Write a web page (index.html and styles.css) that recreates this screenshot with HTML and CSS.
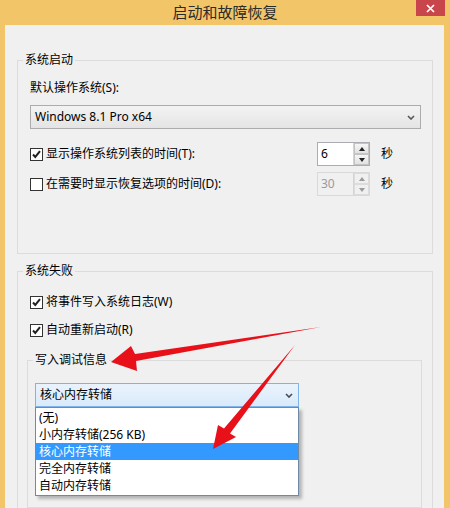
FILE: index.html
```html
<!DOCTYPE html>
<html lang="zh-CN">
<head>
  <meta charset="UTF-8" />
  <title>启动和故障恢复</title>
  <link rel="stylesheet" href="styles.css">
</head>
<body>

  <div class="titlebar">
    <span class="title">启动和故障恢复</span>
    <span class="close">
      <svg width="9" height="9" viewBox="0 0 9 9"><path d="M1 1 L8 8 M8 1 L1 8" stroke="#fff" stroke-width="1.7" fill="none"/></svg>
    </span>
  </div>

  <div class="client">
    <!-- 系统启动 -->
    <fieldset class="group first">
      <legend>系统启动</legend>
      <div class="label">默认操作系统(S):</div>
      <div class="select">
        <span>Windows 8.1 Pro x64</span>
        <svg class="chev" width="8" height="5" viewBox="0 0 8 5"><path d="M1 1 L4 4 L7 1" stroke="#555" stroke-width="1.6" fill="none"/></svg>
      </div>

      <div class="row">
        <span class="check"><svg width="11" height="11" viewBox="0 0 11 11"><path d="M2 5.5 L4.3 8 L9 2.2" stroke="#222" stroke-width="2" fill="none"/></svg></span>
        <span class="text">显示操作系统列表的时间(T):</span>
        <span class="spin">
          <span class="val">6</span>
          <span class="btns"><span class="btn"><i class="up"></i></span><span class="btn"><i class="down"></i></span></span>
        </span>
        <span class="unit">秒</span>
      </div>
      <div class="row">
        <span class="check"></span>
        <span class="text">在需要时显示恢复选项的时间(D):</span>
        <span class="spin off">
          <span class="val">30</span>
          <span class="btns"><span class="btn"><i class="up"></i></span><span class="btn"><i class="down"></i></span></span>
        </span>
        <span class="unit">秒</span>
      </div>
    </fieldset>

    <!-- 系统失败 -->
    <fieldset class="group second">
      <legend>系统失败</legend>
      <div class="line">
        <span class="check"><svg width="11" height="11" viewBox="0 0 11 11"><path d="M2 5.5 L4.3 8 L9 2.2" stroke="#222" stroke-width="2" fill="none"/></svg></span>
        <span>将事件写入系统日志(W)</span>
      </div>
      <div class="line">
        <span class="check"><svg width="11" height="11" viewBox="0 0 11 11"><path d="M2 5.5 L4.3 8 L9 2.2" stroke="#222" stroke-width="2" fill="none"/></svg></span>
        <span>自动重新启动(R)</span>
      </div>

      <fieldset class="group debug">
        <legend>写入调试信息</legend>
        <div class="combo">
          <span>核心内存转储</span>
          <svg class="chev" width="8" height="5" viewBox="0 0 8 5"><path d="M1 1 L4 4 L7 1" stroke="#4a4a4a" stroke-width="1.6" fill="none"/></svg>
          <ul class="list">
            <li>(无)</li>
            <li>小内存转储(256 KB)</li>
            <li class="sel">核心内存转储</li>
            <li>完全内存转储</li>
            <li>自动内存转储</li>
          </ul>
        </div>
      </fieldset>
    </fieldset>
  </div>

  <!-- red annotation arrows -->
  <svg class="arrows" width="450" height="508" viewBox="0 0 450 508">
    <polygon points="321,327 135,354 131,346 111,362 137,371 136,361" fill="#e8111a"/>
    <polygon points="295,345 230,433.5 236,437 213,449 218,425 224,428.5" fill="#e8111a"/>
  </svg>

</body>
</html>
```

FILE: styles.css
```css
* {
  box-sizing: border-box;
}

body {
  margin: 0;
  height: 508px;
  overflow: hidden;
  position: relative;
  background: #f1c568;
  font-family: "Noto Sans", "Noto Sans CJK SC", sans-serif;
  font-size: 12px;
  line-height: 16px;
  color: #000;
}

.titlebar {
  display: grid;
  grid-template-columns: 1fr auto 1fr;
  height: 25px;
}

.title {
  grid-column: 2;
  font-size: 15px;
  line-height: 25px;
  color: #2b2b2b;
}

.close {
  grid-column: 3;
  justify-self: end;
  margin-right: 5px;
  width: 29px;
  height: 16px;
  background: #c8464b;
  display: flex;
  align-items: center;
  justify-content: center;
}

.client {
  margin: 0 6px 0 5px;
  height: 483px;
  background: #f0f0f0;
  padding: 27px 11px 0 12px;
}

.group {
  margin: 0;
  border: 1px solid #dcdcdc;
  min-width: 0;
}

.group legend {
  padding: 0 2px;
  margin-left: -7px;
  line-height: 16px;
}

.first {
  padding: 0 11px 57px 12px;
}

.label {
  margin-top: 12px;
}

.select {
  margin-top: 9px;
  height: 24px;
  border: 1px solid #acacac;
  background: linear-gradient(#f3f3f3, #e4e4e4);
  display: flex;
  align-items: center;
  justify-content: space-between;
  padding: 0 5px 0 4px;
}

.row {
  display: flex;
  align-items: center;
  height: 24px;
  margin-top: 13px;
}

.row + .row {
  margin-top: 6px;
}

.row .text {
  flex: 1;
}

.check {
  width: 13px;
  height: 13px;
  border: 1px solid #333;
  background: #fff;
  margin-right: 3px;
  display: flex;
  align-items: center;
  justify-content: center;
  flex-shrink: 0;
}

.spin {
  width: 53px;
  height: 24px;
  border: 1px solid #abadb3;
  background: #fff;
  display: flex;
}

.spin .val {
  flex: 1;
  padding-left: 3px;
  line-height: 22px;
}

.spin .btns {
  width: 16px;
  display: flex;
  flex-direction: column;
  border-left: 1px solid #d4d4d4;
}

.spin .btn {
  flex: 1;
  display: flex;
  align-items: center;
  justify-content: center;
  background: linear-gradient(#f6f6f6, #e2e2e2);
  border: 1px solid #c4c4c4;
}

.up {
  border-left: 3px solid transparent;
  border-right: 3px solid transparent;
  border-bottom: 4px solid #222;
}

.down {
  border-left: 3px solid transparent;
  border-right: 3px solid transparent;
  border-top: 4px solid #222;
}

.spin.off {
  background: #f0f0f0;
  border-color: #d9d9d9;
  color: #9a9a9a;
}

.spin.off .btn {
  background: #f0f0f0;
  border-color: #dcdcdc;
}

.spin.off .up {
  border-bottom-color: #9a9a9a;
}

.spin.off .down {
  border-top-color: #9a9a9a;
}

.unit {
  margin-left: 11px;
  width: 40px;
}

.second {
  margin-top: 9px;
  padding: 0 10px 0 12px;
}

.line {
  display: flex;
  align-items: center;
  height: 16px;
  margin-top: 15px;
}

.line + .line {
  margin-top: 12px;
}

.debug {
  margin: 14px 0 0 -3px;
  padding: 0 0 100px 7px;
}

.debug legend {
  margin-left: -2px;
}

.combo {
  position: relative;
  margin-top: 15px;
  width: 264px;
  height: 24px;
  border: 1px solid #7eb4ea;
  background: linear-gradient(#eaf3fc, #d9eafb);
  display: flex;
  align-items: center;
  justify-content: space-between;
  padding: 0 5px 0 4px;
}

.list {
  position: absolute;
  top: 23px;
  left: -1px;
  width: 264px;
  margin: 0;
  padding: 1px 0;
  list-style: none;
  background: #fff;
  border: 1px solid #6f8aa5;
  box-shadow: 3px 3px 3px rgba(0, 0, 0, 0.25);
}

.list li {
  height: 17px;
  line-height: 17px;
  padding-left: 3px;
}

.list li.sel {
  background: #3399ff;
  color: #fff;
}

.arrows {
  position: absolute;
  top: 0;
  left: 0;
  pointer-events: none;
}
```
